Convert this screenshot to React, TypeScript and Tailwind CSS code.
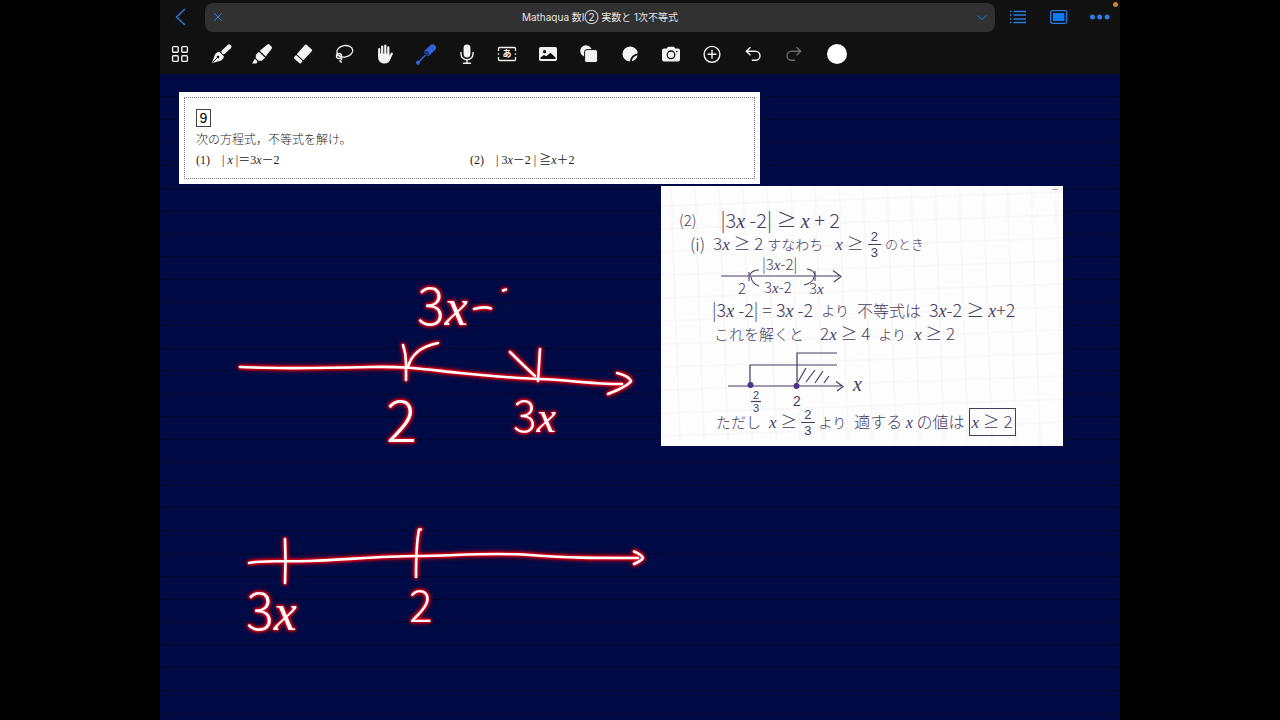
import type { ReactNode } from 'react';

interface Tool {
  label: string;
  icon: ReactNode;
  className?: string;
}

const TOOLS: Tool[] = [
  {
    label: 'Pages',
    icon: (
      <g fill="none" stroke="currentColor" strokeWidth="1.4">
        <rect x="4.6" y="4.6" width="5.6" height="5.6" rx="1" />
        <rect x="13.8" y="4.6" width="5.6" height="5.6" rx="1" />
        <rect x="4.6" y="13.8" width="5.6" height="5.6" rx="1" />
        <rect x="13.8" y="13.8" width="5.6" height="5.6" rx="1" />
      </g>
    ),
  },
  {
    label: 'Pen',
    icon: (
      <>
        <path d="M14.6 9.9 20.2 4.6" stroke="currentColor" strokeWidth="4.6" strokeLinecap="round" />
        <path d="M2.8 21.2 6 12.6C7 10.8 9 9.8 11 9.6l4 4c0 2-1 3.6-2.8 4.8Z" fill="currentColor" />
        <path d="m3.4 20.6 5-5M10 8.8l6 6" stroke="#111" strokeWidth="1" />
        <circle cx="9" cy="15" r="1.3" fill="#111" />
      </>
    ),
  },
  {
    label: 'Highlighter',
    icon: (
      <g fill="currentColor">
        <path d="m9.8 8.8 7.6-6.4q1-.8 2 .1l2.2 2.2q.9 1 .1 2l-6 7.900Z" />
        <path d="m8.900 9.800 6.200 6-3.300 3H8.500l-2.900-2.900.5-3.300Z" />
        <path d="M4.900 16.800 7.600 19.500l-1.100 2-4.500.1Z" />
      </g>
    ),
  },
  {
    label: 'Eraser',
    icon: (
      <g transform="rotate(-48 12 12)" fill="currentColor">
        <rect x="7.6" y="7.4" width="13.6" height="9.2" rx="1" />
        <rect x="2.8" y="7.4" width="3.8" height="9.2" rx="1" />
      </g>
    ),
  },
  {
    label: 'Lasso',
    icon: (
      <g fill="none" stroke="currentColor" strokeWidth="1.3" strokeLinecap="round">
        <ellipse cx="12.8" cy="9.3" rx="8" ry="5.7" transform="rotate(-10 12.8 9.3)" />
        <circle cx="7" cy="14" r="2.5" />
        <path d="M5.5 13.500c2.500.2 5 1.500 4.300 3.400-.6 1.400-2 1-1.800 2.200.1.9 1 .9 1.500.9" />
      </g>
    ),
  },
  {
    label: 'Hand',
    icon: (
      <g fill="none" stroke="currentColor" strokeWidth="2.2" strokeLinecap="round">
        <path d="M6.2 7v7M9.200 4.500V14M12.300 3.500V14M15.300 5.300V15M18.800 11.700 16.600 16" />
        <path
          d="M5.1 11.5h11.3v4l1.8-1.5c-.8 4.5-2.3 7.5-6.4 7.5-4.5 0-6.7-2.5-6.7-6.5Z"
          fill="currentColor"
          stroke="none"
        />
      </g>
    ),
  },
  {
    label: 'Laser pointer',
    className: 'text-[#315fd6]',
    icon: (
      <g strokeLinecap="round">
        <path d="m13.8 10.3 4.8-4.5" stroke="currentColor" strokeWidth="6.8" />
        <path d="M11.5 13 4.3 20.5" stroke="currentColor" strokeWidth="1.5" />
        <circle cx="4" cy="20.7" r="2.1" fill="currentColor" />
        <circle cx="12.6" cy="11.5" r="1.6" fill="currentColor" stroke="#111a3d" strokeWidth="1.1" />
      </g>
    ),
  },
  {
    label: 'Record',
    icon: (
      <>
        <rect x="8.6" y="2.6" width="6.8" height="12.8" rx="3.4" fill="currentColor" />
        <path
          d="M6 10.5V12a6 5.8 0 0 0 12 0v-1.5M12 18v3M8.5 21.2h7"
          fill="none"
          stroke="currentColor"
          strokeWidth="1.4"
          strokeLinecap="round"
        />
      </>
    ),
  },
  {
    label: 'Text box',
    icon: (
      <>
        <path
          d="M3.5 9V6.500q0-1 1-1h15q1 0 1 1V9M3.500 15v2.500q0 1 1 1h15q1 0 1-1V15M3.500 11.300v1.400M20.500 11.300v1.400"
          fill="none"
          stroke="currentColor"
          strokeWidth="1.3"
        />
        <text x="12" y="15" fontSize="9" textAnchor="middle" fill="currentColor" fontWeight="700">
          あ
        </text>
      </>
    ),
  },
  {
    label: 'Image',
    icon: (
      <>
        <rect x="3" y="5" width="18" height="14" rx="1.8" fill="currentColor" />
        <circle cx="8.6" cy="9.7" r="1.6" fill="#111" />
        <path d="M4.5 17v-1.500L8 13l2.200 1.200 4.300-3.400 5 4.700V17Z" fill="#111" />
      </>
    ),
  },
  {
    label: 'Shapes',
    icon: (
      <>
        <circle cx="9" cy="9" r="5.8" fill="currentColor" />
        <rect x="7.6" y="7.6" width="13" height="13" rx="2.3" fill="currentColor" stroke="#111" strokeWidth="1" />
      </>
    ),
  },
  {
    label: 'Sticker',
    icon: (
      <>
        <path d="M19.7 11.5A7.600 7.600 0 1 0 12 19.600c.3-4.400 3.200-7.500 7.700-8.100Z" fill="currentColor" />
        <path d="M19.6 13.200c-3.300.7-5.300 2.700-5.900 6.100 3-.6 5.300-3 5.900-6.100Z" fill="currentColor" />
      </>
    ),
  },
  {
    label: 'Camera',
    icon: (
      <>
        <path
          d="M5 6.500h2.700L9 4.700h6l1.300 1.800H19q2 0 2 2v9q0 2-2 2H5q-2 0-2-2v-9q0-2 2-2Z"
          fill="currentColor"
        />
        <circle cx="12" cy="12.8" r="3.8" fill="none" stroke="#111" strokeWidth="1.3" />
        <circle cx="17.8" cy="9.5" r=".8" fill="#111" />
      </>
    ),
  },
  {
    label: 'Add',
    icon: (
      <g fill="none" stroke="currentColor" strokeWidth="1.4">
        <circle cx="12" cy="12.3" r="7.9" />
        <path d="M12 7.800v9M7.500 12.300h9" />
      </g>
    ),
  },
  {
    label: 'Undo',
    icon: (
      <path
        d="M9.5 5.3 5.3 9.3l4.2 4M5.5 9.3h9a4.5 4.5 0 0 1 0 9h-3.7"
        fill="none"
        stroke="currentColor"
        strokeWidth="1.4"
      />
    ),
  },
  {
    label: 'Redo',
    className: 'text-[#6b6b6b]',
    icon: (
      <path
        d="m14.5 5.3 4.2 4-4.2 4M18.5 9.3h-9a4.5 4.5 0 0 0 0 9h3.7"
        fill="none"
        stroke="currentColor"
        strokeWidth="1.4"
      />
    ),
  },
];

function ToolButton({ label, icon, className = 'text-[#f2f2f2]' }: Tool) {
  return (
    <button type="button" aria-label={label} className={`flex h-10 flex-1 items-center justify-center ${className}`}>
      <svg viewBox="0 0 24 24" className="size-6" fill="none">
        {icon}
      </svg>
    </button>
  );
}

function TopBar() {
  return (
    <header className="bg-[#111]">
      <div className="relative flex h-[34px] items-center text-[#2b7be0]">
        <button type="button" aria-label="Back" className="mr-1 flex w-[41px] justify-center">
          <svg viewBox="0 0 24 24" className="size-6" fill="none" stroke="currentColor" strokeWidth="1.4">
            <path d="m16 4-8.5 8L16 20" />
          </svg>
        </button>
        <div className="mr-[2px] flex h-[29px] flex-1 items-center rounded-lg bg-[#313131] px-2">
          <button type="button" aria-label="Close tab">
            <svg viewBox="0 0 10 10" className="size-[10px]" stroke="currentColor" strokeWidth="1">
              <path d="m1 1 8 8M9 1 1 9" />
            </svg>
          </button>
          <h1 className="flex-1 text-center text-[10px] leading-4 text-[#e4e4e4]">
            Mathaqua 数I② 実数と 1次不等式
          </h1>
          <button type="button" aria-label="Tab menu">
            <svg viewBox="0 0 10 10" className="size-[10px]" fill="none" stroke="currentColor" strokeWidth="1">
              <path d="m.5 3.5 4.5 4 4.5-4" />
            </svg>
          </button>
        </div>
        <button type="button" aria-label="Outline" className="flex w-[41px] justify-center">
          <svg viewBox="0 0 24 24" className="size-6" stroke="currentColor" strokeWidth="1.6">
            <path d="M7.5 6.500h12.500M7.500 10h12.500M7.500 14h12.500M7.500 17.500h12.500" />
            <path d="M4 6.500h1.500M4 10h1.500M4 14h1.500M4 17.500h1.500" />
          </svg>
        </button>
        <button type="button" aria-label="Presentation" className="flex w-[41px] justify-center">
          <svg viewBox="0 0 24 24" className="size-6" fill="none">
            <rect x="3.7" y="5.7" width="16" height="12.6" rx="1.8" stroke="currentColor" strokeWidth="1.3" />
            <rect x="6" y="8" width="11.4" height="8" fill="#0a7bff" />
          </svg>
        </button>
        <button type="button" aria-label="More" className="flex w-[41px] justify-center">
          <svg viewBox="0 0 24 24" className="size-6" fill="currentColor">
            <circle cx="4.5" cy="12" r="2.5" />
            <circle cx="11.8" cy="12" r="2.5" />
            <circle cx="19.1" cy="12" r="2.5" />
          </svg>
        </button>
        <span className="absolute top-[2px] right-[2px] size-[5px] rounded-full bg-[#c8862e]" />
      </div>
      <nav className="flex h-10 items-center gap-[2px]">
        <div className="flex w-[654px]">
          {TOOLS.map((tool) => (
            <ToolButton key={tool.label} {...tool} />
          ))}
        </div>
        <button type="button" aria-label="Pen colour" className="flex w-[41px] justify-center">
          <span className="size-5 rounded-full bg-white" />
        </button>
      </nav>
    </header>
  );
}

function ProblemCard() {
  return (
    <section className="absolute top-[18px] left-[19px] w-[581px] bg-white p-[5px] text-[#222]">
      <div className="border border-dotted border-[#777] px-[11px] pt-[11px] pb-2 font-['Liberation_Serif','Noto_Sans_CJK_JP',serif] text-[12px]">
        <div className="flex h-[18px] w-[15px] items-center justify-center border border-[#444] font-['Liberation_Sans',sans-serif] text-[14px] text-black">
          9
        </div>
        <p className="mt-[5px] leading-4 font-light">次の方程式，不等式を解け。</p>
        <div className="mt-[2px] flex leading-5">
          <p className="flex w-[274px] gap-3">
            <span>(1)</span>
            <span>
              | <i>x</i> |＝3<i>x</i>－2
            </span>
          </p>
          <p className="flex gap-3">
            <span>(2)</span>
            <span>
              | 3<i>x</i>－2 | ≧<i>x</i>＋2
            </span>
          </p>
        </div>
      </div>
    </section>
  );
}

function X() {
  return <i className="font-['Liberation_Serif',serif]">x</i>;
}

function Fraction() {
  return (
    <span className="inline-flex flex-col items-center font-['Liberation_Sans',sans-serif] text-[13px] leading-[15px]">
      <span className="border-b border-current px-[3px]">2</span>
      <span>3</span>
    </span>
  );
}

function IntervalSketch() {
  return (
    <svg className="h-[42px] w-full overflow-visible" fill="none" stroke="currentColor" strokeWidth="1.1">
      <path d="M60 20H178M172 14.5 180 20.5 173 26M88 16V25M154 15V25" />
      <path d="M98 14Q91 14 89 19M90 21Q91 28 98 30M146 13Q153 14 154 19M153 21Q152 27 143 29" />
      <g fill="currentColor" stroke="none" fontSize="15">
        <text x="101" y="14">
          |3<tspan fontFamily="Liberation Serif" fontStyle="italic">x</tspan>-2|
        </text>
        <text x="77" y="38">2</text>
        <text x="103" y="37">
          3<tspan fontFamily="Liberation Serif" fontStyle="italic">x</tspan>-2
        </text>
        <text x="148" y="38">
          3<tspan fontFamily="Liberation Serif" fontStyle="italic">x</tspan>
        </text>
      </g>
    </svg>
  );
}

function SolutionSketch() {
  return (
    <svg className="h-16 w-full overflow-visible" fill="none" stroke="currentColor" strokeWidth="1.2">
      <path d="M67 40H180M175 35.5 182 40.5 176 45" />
      <path d="M89 39V19H176M136 39V7H176" />
      <path d="M137 36 145 22M145 36 154 24M154 37 162 25M163 37 168 30" />
      <circle cx="89.5" cy="39" r="2.4" fill="#4b3590" stroke="#4b3590" />
      <circle cx="135.5" cy="40" r="2.4" fill="#4b3590" stroke="#4b3590" />
      <path d="M90 55.5H100" />
      <g fill="currentColor" stroke="none" fontSize="11" fontFamily="Liberation Sans">
        <text x="92" y="53">2</text>
        <text x="92" y="66">3</text>
        <text x="132" y="60" fontSize="14">
          2
        </text>
        <text x="192" y="45" fontSize="20" fontFamily="Liberation Serif" fontStyle="italic">
          x
        </text>
      </g>
    </svg>
  );
}

function NotePhoto() {
  return (
    <section className="absolute top-28 left-[501px] w-[402px] bg-[#fefdfd] pt-[22px] pb-3 font-['Noto_Sans_CJK_JP',sans-serif] text-[17px] leading-6 font-light whitespace-nowrap text-[#453c62]">
      <svg className="absolute inset-0 size-full">
        <defs>
          <pattern id="squares" width="24" height="23" patternUnits="userSpaceOnUse" patternTransform="rotate(-2)">
            <path d="M0 20H24M10 0V23" stroke="#f5f2f1" strokeWidth="1" />
          </pattern>
        </defs>
        <rect width="100%" height="100%" fill="url(#squares)" />
        <path d="M391 3.5H397" stroke="#d98c9c" />
      </svg>
      <div className="relative">
        <p className="flex h-6 items-center gap-6 pl-[18px]">
          <span className="text-[15px]">(2)</span>
          <span className="text-[20px]">
            |3<X /> -2| ≥ <X /> + 2
          </span>
        </p>
        <p className="flex h-6 items-center gap-1 pl-[29px]">
          <span className="mr-1">(i)</span>
          <span>
            3<X /> ≥ 2
          </span>
          <span className="mr-2 text-[14px]">すなわち</span>
          <span>
            <X /> ≥
          </span>
          <Fraction />
          <span className="text-[13px]">のとき</span>
        </p>
        <IntervalSketch />
        <p className="flex h-6 items-center gap-2 pl-[51px]">
          <span className="text-[18px]">
            |3<X /> -2| = 3<X /> -2
          </span>
          <span className="text-[14px]">より</span>
          <span className="text-[16px]">不等式は</span>
          <span className="text-[18px]">
            3<X />-2 ≥ <X />+2
          </span>
        </p>
        <p className="flex h-6 items-center gap-2 pl-[53px]">
          <span className="mr-2 text-[15px]">これを解くと</span>
          <span>
            2<X /> ≥ 4
          </span>
          <span className="text-[14px]">より</span>
          <span>
            <X /> ≥ 2
          </span>
        </p>
        <SolutionSketch />
        <p className="flex h-6 items-center gap-1 pl-[55px]">
          <span className="mr-1 text-[15px]">ただし</span>
          <span>
            <X /> ≥
          </span>
          <Fraction />
          <span className="mr-1 text-[14px]">より</span>
          <span className="text-[16px]">
            適する <X /> の値は
          </span>
          <span className="border border-current px-[2px]">
            <X /> ≥ 2
          </span>
        </p>
      </div>
    </section>
  );
}

// Laser pen strokes: white core with a red glow
function LaserInk() {
  return (
    <svg className="pointer-events-none absolute inset-0 size-full">
      <g
        transform="translate(-160 -74)"
        className="[filter:drop-shadow(0_0_1px_#ff0014)_drop-shadow(0_0_1px_#e80012)_drop-shadow(0_0_2px_#c00010)]"
        fill="none"
        stroke="#fff"
        strokeWidth="2.6"
        strokeLinecap="round"
        strokeLinejoin="round"
      >
        <path d="M240 367C280 369 330 368 370 367S430 370 460 373 510 378 540 379 590 384 622 384" />
        <path d="M617 373Q629 376 631 381 628 386 608 394" />
        <path d="M403 345Q406 354 406 362V380M408 367Q413 348 438 343" />
        <path d="M510 352Q526 368 535 376M540 349 538 381" />
        <path d="M503 290.5 506 289.5" />
        <path d="M249 563C262 560 275 562 310 561S380 556 416 556 490 552 530 555 590 558 638 558" />
        <path d="M634 551.5Q642 555 643 558 641 561 634 564" />
        <path d="M285 539 285.5 561 285 583M421 529.5H419Q416 545 416 577" />
        <g fill="#fff" stroke="none" fontFamily="Noto Sans CJK JP" fontWeight="300">
          <text x="417" y="325" fontSize="52">
            3<tspan fontFamily="Liberation Serif" fontStyle="italic">x</tspan>
          </text>
          <text x="386" y="442" fontSize="58">
            2
          </text>
          <text x="513" y="432" fontSize="44">
            3<tspan fontFamily="Liberation Serif" fontStyle="italic">x</tspan>
          </text>
          <text x="246" y="630" fontSize="52">
            3<tspan fontFamily="Liberation Serif" fontStyle="italic">x</tspan>
          </text>
          <text x="409" y="622" fontSize="44">
            2
          </text>
        </g>
        <path d="M474 309Q484 306 491 308.5" />
      </g>
    </svg>
  );
}

const RULES = Array.from({ length: 60 }, (_, i) => Math.floor((i * 137) / 6));

function Canvas() {
  return (
    <main className="relative flex-1 overflow-hidden bg-[#000a45]">
      <svg className="absolute inset-0 size-full" fill="#01062f">
        {RULES.map((y) => (
          <rect key={y} y={y} width="100%" height="1" />
        ))}
      </svg>
      <ProblemCard />
      <NotePhoto />
      <LaserInk />
    </main>
  );
}

export default function App() {
  return (
    <div className="flex min-h-screen justify-center bg-black font-['Inter','Noto_Sans_CJK_JP',sans-serif]">
      <div className="flex w-3/4 flex-col">
        <TopBar />
        <Canvas />
      </div>
    </div>
  );
}
